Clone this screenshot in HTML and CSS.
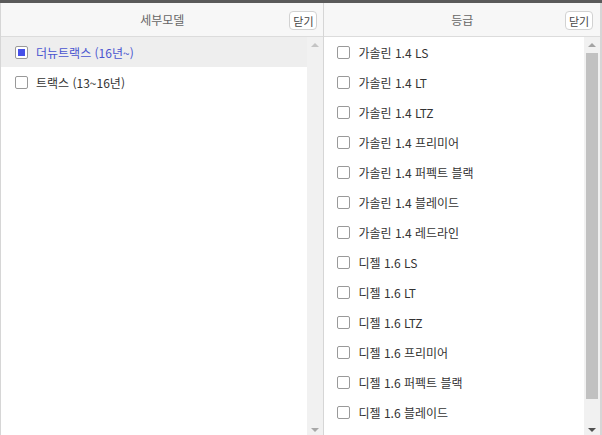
FILE: index.html
```html
<!DOCTYPE html>
<html lang="ko">
<head>
    <meta charset="UTF-8">
    <title>세부모델 / 등급</title>
    <link rel="stylesheet" href="styles.css">
</head>
<body>
    <div class="picker">
        <div class="panel panel-model">
            <div class="panel-head">
                <span class="panel-title">세부모델</span>
                <button class="btn-close">닫기</button>
            </div>
            <div class="panel-body">
                <ul class="opt-list">
                    <li class="opt on"><span class="chk"></span>더뉴트랙스 (16년~)</li>
                    <li class="opt"><span class="chk"></span>트랙스 (13~16년)</li>
                </ul>
                <div class="scroll off">
                    <span class="arr up"></span>
                    <span class="track"></span>
                    <span class="arr down"></span>
                </div>
            </div>
        </div>
        <div class="panel panel-grade">
            <div class="panel-head">
                <span class="panel-title">등급</span>
                <button class="btn-close">닫기</button>
            </div>
            <div class="panel-body">
                <ul class="opt-list">
                    <li class="opt"><span class="chk"></span>가솔린 1.4 LS</li>
                    <li class="opt"><span class="chk"></span>가솔린 1.4 LT</li>
                    <li class="opt"><span class="chk"></span>가솔린 1.4 LTZ</li>
                    <li class="opt"><span class="chk"></span>가솔린 1.4 프리미어</li>
                    <li class="opt"><span class="chk"></span>가솔린 1.4 퍼펙트 블랙</li>
                    <li class="opt"><span class="chk"></span>가솔린 1.4 블레이드</li>
                    <li class="opt"><span class="chk"></span>가솔린 1.4 레드라인</li>
                    <li class="opt"><span class="chk"></span>디젤 1.6 LS</li>
                    <li class="opt"><span class="chk"></span>디젤 1.6 LT</li>
                    <li class="opt"><span class="chk"></span>디젤 1.6 LTZ</li>
                    <li class="opt"><span class="chk"></span>디젤 1.6 프리미어</li>
                    <li class="opt"><span class="chk"></span>디젤 1.6 퍼펙트 블랙</li>
                    <li class="opt"><span class="chk"></span>디젤 1.6 블레이드</li>
                </ul>
                <div class="scroll">
                    <span class="arr up"></span>
                    <span class="track"><span class="thumb"></span></span>
                    <span class="arr down"></span>
                </div>
            </div>
        </div>
    </div>
</body>
</html>
```

FILE: styles.css
```css
/* two-column option picker */
body {
    margin: 0;
    font-family: "Noto Sans CJK KR", "Noto Sans", sans-serif;
    background: #fff;
    overflow: hidden;
}
.picker {
    display: flex;
    width: 602px;
    height: 435px;
    border-top: 3px solid #5a5a5a;
    box-sizing: border-box;
    overflow: hidden;
}
.panel {
    display: flex;
    flex-direction: column;
    border-left: 1px solid #d6d6d6;
}
.panel-model {
    width: 323px;
}
.panel-grade {
    width: 276px;
    border-right: 2px solid #d6d6d6;
}
.panel-head {
    position: relative;
    height: 33px;
    background: #f7f7f7;
    border-bottom: 1px solid #dcdcdc;
    display: flex;
    align-items: center;
    justify-content: center;
}
.panel-title {
    font-size: 12px;
    color: #666;
}
.btn-close {
    position: absolute;
    top: 8px;
    right: 6px;
    width: 28px;
    height: 19px;
    padding: 0;
    border: 1px solid #d2d2d2;
    border-radius: 4px;
    background: #fff;
    font-family: inherit;
    font-size: 11px;
    line-height: 16px;
    color: #444;
}
.panel-grade .btn-close {
    right: 7px;
}
.panel-body {
    flex: 1;
    display: flex;
    min-height: 0;
}
.opt-list {
    flex: 1;
    margin: 0;
    padding: 0;
    list-style: none;
}
.opt {
    height: 30px;
    display: flex;
    align-items: center;
    padding-left: 14px;
    font-size: 12px;
    color: #333;
}
.opt.on {
    background: #eeeeee;
    color: #4a55d0;
}
.chk {
    width: 11px;
    height: 11px;
    border: 1px solid #999;
    border-radius: 2px;
    background: #fff;
    margin-right: 8px;
    display: flex;
    align-items: center;
    justify-content: center;
}
.opt.on .chk::after {
    content: "";
    width: 7px;
    height: 7px;
    background: #4650e8;
}
.panel-grade .opt {
    padding-left: 13px;
}

/* fake scrollbars */
.scroll {
    width: 16px;
    background: #f1f1f1;
    display: flex;
    flex-direction: column;
    align-items: center;
}
.arr {
    width: 0;
    height: 0;
    border-left: 4px solid transparent;
    border-right: 4px solid transparent;
    margin: 6px 0;
}
.arr.up {
    border-bottom: 4px solid #a3a3a3;
}
.arr.down {
    border-top: 4px solid #505050;
    margin-bottom: 3px;
}
.scroll.off .arr.up {
    border-bottom-color: #c4c4c4;
}
.scroll.off .arr.down {
    border-top-color: #a8a8a8;
}
.track {
    flex: 1;
    width: 12px;
    display: flex;
    flex-direction: column;
}
.thumb {
    height: 346px;
    background: #c1c1c1;
}
```
